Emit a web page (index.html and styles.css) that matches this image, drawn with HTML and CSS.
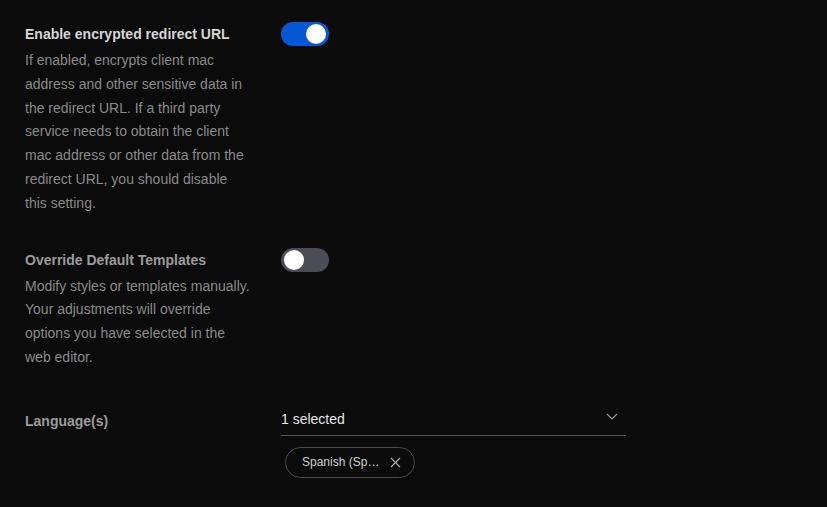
FILE: index.html
```html
<!DOCTYPE html>
<html>
<head>
<meta charset="utf-8">
<link rel="stylesheet" href="styles.css">
</head>
<body>
<div class="page">
  <div class="row">
    <div class="info">
      <div class="title">Enable encrypted redirect URL</div>
      <div class="desc">If enabled, encrypts client mac address and other sensitive data in the redirect URL. If a third party service needs to obtain the client mac address or other data from the redirect URL, you should disable this setting.</div>
    </div>
    <div class="control">
      <div class="toggle on"><span class="knob"></span></div>
    </div>
  </div>
  <div class="row">
    <div class="info">
      <div class="title muted">Override Default Templates</div>
      <div class="desc">Modify styles or templates manually. Your adjustments will override options you have selected in the web editor.</div>
    </div>
    <div class="control">
      <div class="toggle"><span class="knob"></span></div>
    </div>
  </div>
  <div class="row lang">
    <div class="info">
      <div class="title muted label">Language(s)</div>
    </div>
    <div class="control">
      <div class="select">
        <span class="value">1 selected</span>
        <svg class="chev" width="12" height="7" viewBox="0 0 12 7"><path d="M1 1 L6 6 L11 1" fill="none" stroke="#9a9a9a" stroke-width="1.2"/></svg>
      </div>
      <div class="chips">
        <div class="chip">
          <span class="chip-text">Spanish (Spain)</span>
          <svg class="x" width="11" height="11" viewBox="0 0 11 11"><path d="M1 1 L10 10 M10 1 L1 10" fill="none" stroke="#a8a8a8" stroke-width="1.2"/></svg>
        </div>
      </div>
    </div>
  </div>
</div>
</body>
</html>
```

FILE: styles.css
```css
html, body {
  margin: 0;
  padding: 0;
  background: #0b0b0b;
}
body {
  font-family: "Liberation Sans", Arial, sans-serif;
  font-size: 14px;
  color: #8a8a8a;
}
.page {
  padding-top: 22px;
}
.row {
  display: grid;
  grid-template-columns: 256px 345px;
  padding-left: 25px;
  margin-bottom: 32px;
}
.info {
  width: 226px;
}
.title {
  font-weight: bold;
  color: #d6d6d6;
  line-height: 24px;
}
.title.muted {
  color: #9c9c9c;
}
.desc {
  margin-top: 3px;
  line-height: 23.8px;
  color: #8a8a8a;
}
.toggle {
  width: 48px;
  height: 24px;
  border-radius: 12px;
  background: #4a4d55;
  position: relative;
}
.toggle.on {
  background: #0559d6;
}
.knob {
  position: absolute;
  top: 2px;
  left: 3px;
  width: 20px;
  height: 20px;
  border-radius: 50%;
  background: #ffffff;
}
.toggle.on .knob {
  left: auto;
  right: 3px;
}
.row.lang {
  margin-top: 33px;
}
.label {
  padding-top: 6px;
}
.select {
  height: 32px;
  border-bottom: 1px solid #555555;
  display: flex;
  align-items: center;
  justify-content: space-between;
}
.value {
  color: #e6e6e6;
  font-size: 14px;
}
.chev {
  margin-right: 8px;
  margin-top: -4px;
}
.chips {
  display: flex;
  margin-top: 11px;
  padding-left: 4px;
}
.chip {
  box-sizing: border-box;
  height: 31px;
  width: 130px;
  border: 1px solid #4a4a4a;
  border-radius: 16px;
  display: flex;
  align-items: center;
  padding-left: 16px;
  padding-right: 13px;
}
.chip-text {
  font-size: 12px;
  color: #d0d0d0;
  white-space: nowrap;
  overflow: hidden;
  text-overflow: ellipsis;
  width: 79px;
}
.x {
  margin-left: auto;
}
```
